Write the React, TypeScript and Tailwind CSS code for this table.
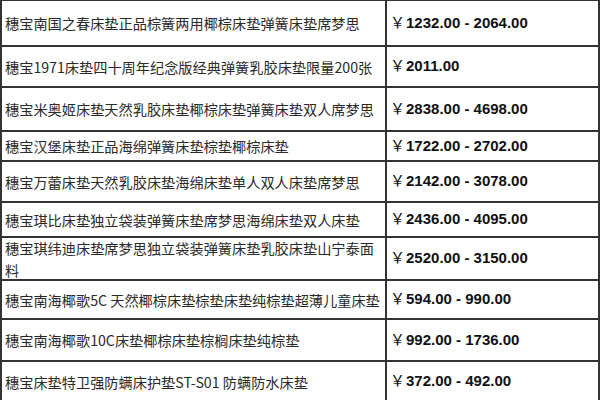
import React from "react";

interface Row {
  name: string;
  price: string;
  h: string;
}

const rows: Row[] = [
  { name: "穗宝南国之春床垫正品棕簧两用椰棕床垫弹簧床垫席梦思", price: "1232.00 - 2064.00", h: "h-[46px]" },
  { name: "穗宝1971床垫四十周年纪念版经典弹簧乳胶床垫限量200张", price: "2011.00", h: "h-[41px]" },
  { name: "穗宝米奥姬床垫天然乳胶床垫椰棕床垫弹簧床垫双人席梦思", price: "2838.00 - 4698.00", h: "h-[44px]" },
  { name: "穗宝汉堡床垫正品海绵弹簧床垫棕垫椰棕床垫", price: "1722.00 - 2702.00", h: "h-[30px]" },
  { name: "穗宝万蕾床垫天然乳胶床垫海绵床垫单人双人床垫席梦思", price: "2142.00 - 3078.00", h: "h-[41px]" },
  { name: "穗宝琪比床垫独立袋装弹簧床垫席梦思海绵床垫双人床垫", price: "2436.00 - 4095.00", h: "h-[35px]" },
  { name: "穗宝琪纬迪床垫席梦思独立袋装弹簧床垫乳胶床垫山宁泰面料", price: "2520.00 - 3150.00", h: "h-[43px]" },
  { name: "穗宝南海椰歌5C 天然椰棕床垫棕垫床垫纯棕垫超薄儿童床垫", price: "594.00 - 990.00", h: "h-[39px]" },
  { name: "穗宝南海椰歌10C床垫椰棕床垫棕榈床垫纯棕垫", price: "992.00 - 1736.00", h: "h-[42px]" },
  { name: "穗宝床垫特卫强防螨床护垫ST-S01 防螨防水床垫", price: "372.00 - 492.00", h: "h-[39px]" },
];

export default function App() {
  return (
    <div className="w-[600px] h-[400px] overflow-hidden bg-white border-t border-[#333]">
      {rows.map((r, i) => (
        <div
          key={i}
          className={`${r.h} flex border-l-2 border-r-2 border-[#333] ${i < rows.length - 1 ? "border-b-2" : ""}`}
        >
          <div className="w-[385px] shrink-0 flex items-center pl-[3px] pr-[2px] border-r-2 border-[#333]">
            <span className="text-[14.2px] leading-[22px] text-[#2a2a2a] [font-family:'Noto_Sans_CJK_SC',sans-serif]">
              {r.name}
            </span>
          </div>
          <div className="flex-1 flex items-center pl-[3px]">
            <span className="text-[15px] font-bold text-[#111] [font-family:'Liberation_Sans','Noto_Sans_CJK_SC',sans-serif]">
              <span className="font-normal mr-[1px]">￥</span>
              {r.price}
            </span>
          </div>
        </div>
      ))}
    </div>
  );
}
